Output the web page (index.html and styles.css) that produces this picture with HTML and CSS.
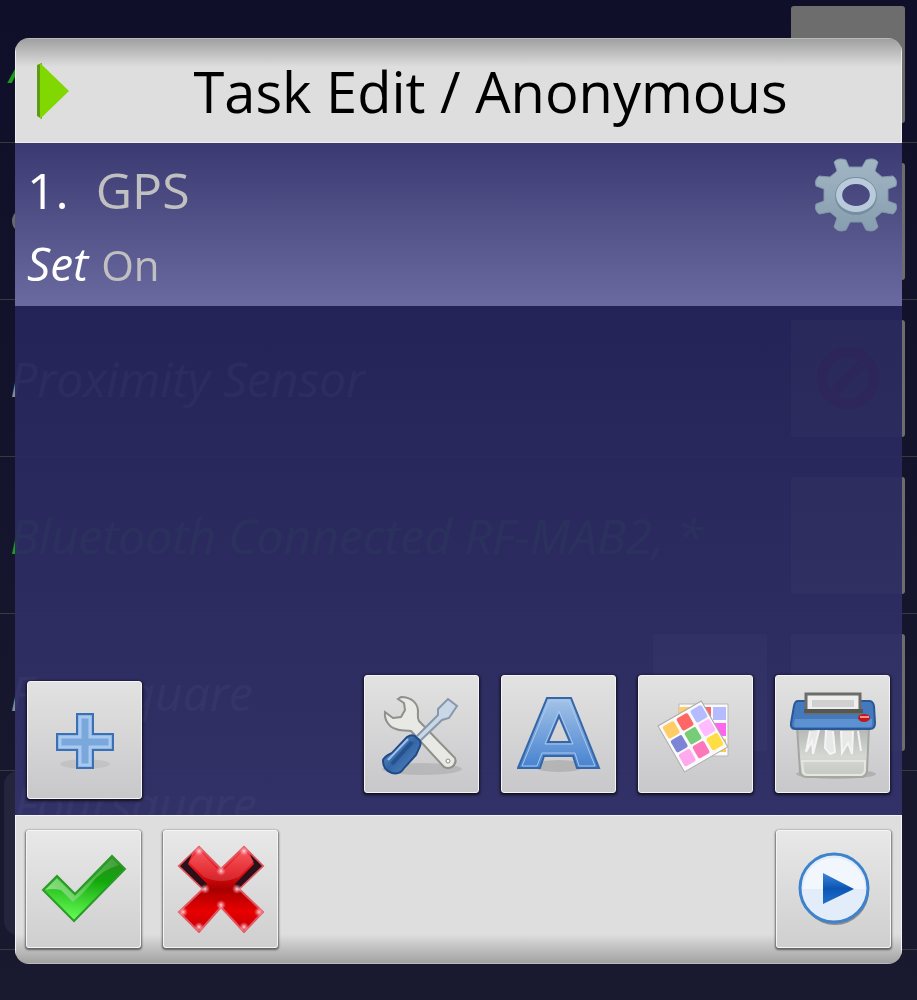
FILE: index.html
```html
<!DOCTYPE html>
<html lang="en">
<head>
  <meta charset="UTF-8">
  <meta name="viewport" content="width=device-width, initial-scale=1.0">
  <title>Task Edit / Anonymous</title>
  <link rel="stylesheet" href="styles.css">
</head>
<body>
  <!-- Profile list behind the dialog -->
  <ul class="profiles">
    <li class="profile first active"><span class="name">A</span><span class="tile"></span></li>
    <li class="profile"><span class="name"><span class="ring"></span></span><span class="tile"></span></li>
    <li class="profile">
      <span class="name">Proximity Sensor</span>
      <span class="tile">
        <svg viewBox="0 0 64 64" width="64" height="64"><circle cx="32" cy="32" r="26" fill="none" stroke="#701838" stroke-width="11"/><path d="M18 46 46 18" stroke="#701838" stroke-width="10"/></svg>
      </span>
    </li>
    <li class="profile active">
      <span class="name">Bluetooth Connected RF-MAB2, *</span>
      <span class="tile">
        <svg viewBox="0 0 84 68" width="84" height="68"><path d="M0 36 14 22 33 40 70 1 84 15 33 67z" fill="#4c6a5c"/></svg>
      </span>
    </li>
    <li class="profile"><span class="name">Foursquare</span><span class="tile"></span><span class="tile"></span></li>
    <li class="profile last"><span class="name">Foursquare</span></li>
  </ul>

  <!-- Task edit dialog -->
  <main class="dialog">
    <header class="title-bar">
      <svg class="title-arrow" viewBox="0 0 34 58" width="34" height="58">
        <path d="M1 3 6 1V57L1 54z" fill="#5f9a14"/>
        <path d="M4 1 33 29 4 57z" fill="#80d800"/>
      </svg>
      <h1>Task Edit / Anonymous</h1>
    </header>

    <section class="action">
      <div class="action-text">
        <p class="action-name"><span class="number">1.</span> GPS</p>
        <p class="action-args"><em>Set</em> On</p>
      </div>
      <svg class="gear" viewBox="-42 -40 84 80" width="84" height="80">
        <defs>
          <linearGradient id="gearFill" x1="0" y1="0" x2="0" y2="1">
            <stop offset="0" stop-color="#a3b5c3"/>
            <stop offset="1" stop-color="#869eb0"/>
          </linearGradient>
        </defs>
        <path fill="url(#gearFill)" stroke="#7f97a8" stroke-width="1" fill-rule="evenodd" d="M-7-28-6-28 6-28 10-35Q18-38 22-33L19-24 26-18 37-19Q42-15 40-9L32-6V6L40 9Q42 15 37 19L26 17 19 23 22 32Q18 38 10 35L6 27H-6L-10 35Q-18 38-22 32L-19 23-26 17-37 19Q-42 15-40 9L-32 6V-6L-40-9Q-42-15-37-19L-26-18-19-24-22-33Q-18-38-10-35zM0-12C-19-12-19 12 0 12S19-12 0-12z"/>
        <ellipse rx="19" ry="17" fill="none" stroke="#768ea0" stroke-width="4" cy="1"/>
        <ellipse rx="17" ry="14" fill="none" stroke="#b9cbdb" stroke-width="6"/>
      </svg>
    </section>

    <section class="workspace">
      <div class="toolbar">
        <button class="tile-button add" aria-label="Add action">
          <svg viewBox="0 -3 60 64" width="60" height="64">
            <ellipse cx="30" cy="53" rx="25" ry="5" fill="#000" opacity="0.06"/>
            <path d="M22 3h16v20h20v16H38v18H22V39H2V23h20z" fill="#7ba8dc" stroke="#3b70b4" stroke-width="2"/>
            <path d="M25 6h10v20h20v10H35v18H25V36H5V26h20z" fill="none" stroke="#a9caee" stroke-width="3"/>
          </svg>
        </button>
        <button class="tile-button" aria-label="Task properties">
          <svg viewBox="0 -3 84 84" width="84" height="84">
            <defs>
              <linearGradient id="handle" x1="0" y1="0" x2="1" y2="1">
                <stop offset="0" stop-color="#7aa7dc"/><stop offset="0.5" stop-color="#3465a4"/><stop offset="1" stop-color="#5b8fd0"/>
              </linearGradient>
            </defs>
            <ellipse cx="42" cy="74" rx="40" ry="6" fill="#000" opacity="0.1"/>
            <path d="M21 2C32 2 38 9 38 16 38 20 37 23 39 26L75 63Q77 68 72 72 68 74 64 72L31 36C25 35 20 36 16 34 9 32 4 25 5 17L13 23 21 22 25 15 24 8 18 4z" fill="#e8e8e4" stroke="#8e908a" stroke-width="2"/>
            <circle cx="68" cy="66" r="2" fill="#fff" stroke="#888a85"/>
            <path d="M36 42 58 20V14L68 4 77 11 69 23 62 25 40 46z" fill="#c9d7e6" stroke="#8798aa" stroke-width="2"/>
            <path d="M27 42Q33 38 37 43 42 46 40 51L36 60 24 73Q20 80 12 78 3 75 3 66 3 62 12 58z" fill="url(#handle)" stroke="#204a87" stroke-width="2"/>
            <path d="M12 69 32 47" stroke="#26528f" stroke-width="4"/>
            <path d="M8 65 28 44" stroke="#9cc0ea" stroke-width="2"/>
          </svg>
        </button>
        <button class="tile-button" aria-label="Label">
          <svg viewBox="0 -4 84 84" width="84" height="84">
            <defs>
              <linearGradient id="letter" x1="0" y1="0" x2="0" y2="1">
                <stop offset="0" stop-color="#a4c3e8"/><stop offset="1" stop-color="#4682cf"/>
              </linearGradient>
            </defs>
            <ellipse cx="42" cy="70" rx="26" ry="6" fill="#000" opacity="0.12"/>
            <path fill-rule="evenodd" d="M30 2H54L82 72H60L56 60H27L23 72H1zM42 20 31 46H53z" fill="url(#letter)" stroke="#3566a8" stroke-width="2"/>
            <path d="M32 5H52L78 70H62L58 57H25L20 70H5zM42 15 28 48H56z" fill="none" stroke="#a9c8ee" stroke-width="1"/>
          </svg>
        </button>
        <button class="tile-button" aria-label="Icon">
          <svg viewBox="1 -3 84 84" width="84" height="84">
            <path d="M26 9H75V61H26z" fill="#fafafa" stroke="#b8b8b8"/>
            <path d="M26 12h14v10H26z" fill="#fc6"/><path d="M44 12h14v12H44z" fill="#f66"/><path d="M60 12h13v13H60z" fill="#b4bcff"/>
            <path d="M60 28h13v13H60z" fill="#f6e"/><path d="M60 44h13v13H60z" fill="#fc4"/>
            <g transform="translate(5 31) rotate(-30)">
              <rect x="0" y="0" width="50" height="53" fill="#fafafa" stroke="#aaa"/>
              <rect x="3" y="3" width="13" height="14" rx="2" fill="#fc6"/><rect x="19" y="3" width="13" height="14" rx="2" fill="#f66"/><rect x="35" y="3" width="13" height="14" rx="2" fill="#b4bcff"/>
              <rect x="3" y="19" width="13" height="14" rx="2" fill="#7c84d8"/><rect x="19" y="19" width="13" height="14" rx="2" fill="#7c7"/><rect x="35" y="19" width="13" height="14" rx="2" fill="#fbf"/>
              <rect x="3" y="35" width="13" height="14" rx="2" fill="#fae"/><rect x="19" y="35" width="13" height="14" rx="2" fill="#f7b"/><rect x="35" y="35" width="13" height="14" rx="2" fill="#fd4"/>
            </g>
          </svg>
        </button>
        <button class="tile-button" aria-label="Delete">
          <svg viewBox="0 -2 90 90" width="90" height="90">
            <defs>
              <linearGradient id="bin" x1="0" y1="0" x2="0" y2="1">
                <stop offset="0" stop-color="#b4b6b4"/><stop offset="0.6" stop-color="#d6d8d4"/><stop offset="1" stop-color="#c4c8c0"/>
              </linearGradient>
            </defs>
            <ellipse cx="48" cy="83" rx="40" ry="5" fill="#000" opacity="0.13"/>
            <path d="M9 36H81L79 80Q78 86 73 86H19Q12 86 12 80z" fill="url(#bin)" stroke="#a4a6a2" stroke-width="2"/>
            <path d="M14 70H77V79Q76 84 72 84H20Q15 84 15 79z" fill="none" stroke="#e4e6e0" stroke-width="2"/>
            <path d="M22 40 18 61 24 50 25 63 31 39M38 39 37 57 42 63 47 61 45 40M53 40 54 62 60 52 64 63 65 40M70 40 73 60" fill="#e8e8e8" stroke="#f4f4f4" stroke-width="2"/>
            <path d="M10 10H81Q85 10 86 15L87 32Q87 38 82 38H8Q2 38 3 32L6 15Q7 10 10 10z" fill="#4479bd" stroke="#2a5796" stroke-width="2"/>
            <path d="M7 28H84V34Q84 36 82 36H8Q5 36 6 33z" fill="#5c92d2"/>
            <path d="M18 3H72V22H18z" fill="#eee" stroke="#6b6d68" stroke-width="3"/>
            <path d="M16 20H75" stroke="#555753" stroke-width="4"/>
            <path d="M24 9H66V16H24z" fill="#d0d0d0"/>
            <ellipse cx="76" cy="27" rx="6" ry="4" fill="#c01818"/><path d="M72 26h9" stroke="#f88" stroke-width="2"/>
          </svg>
        </button>
      </div>
    </section>

    <footer class="button-bar">
      <button class="tile-button" aria-label="Accept">
        <svg viewBox="0 0 86 70" width="86" height="70">
          <defs>
            <linearGradient id="tick" x1="0.6" y1="0" x2="0.4" y2="1">
              <stop offset="0" stop-color="#2a8a20"/><stop offset="0.35" stop-color="#12a80c"/><stop offset="1" stop-color="#68ff58"/>
            </linearGradient>
            <linearGradient id="tickShine" x1="0" y1="0" x2="1" y2="0">
              <stop offset="0" stop-color="#c8f4c0"/><stop offset="1" stop-color="#4fae46"/>
            </linearGradient>
          </defs>
          <path d="M2 36 16 22 34 40 71 2 84 15 33 67z" fill="url(#tick)" stroke="#2a9a28" stroke-width="2"/>
          <path d="M4 36 16 24 34 42 71 4 78 11Q60 16 50 30 42 40 32 48L20 36Q10 34 4 36z" fill="url(#tickShine)" opacity="0.6"/>
        </svg>
      </button>
      <button class="tile-button" aria-label="Cancel">
        <svg viewBox="0 0 88 88" width="88" height="88">
          <defs>
            <linearGradient id="cross" x1="0" y1="0" x2="0" y2="1">
              <stop offset="0" stop-color="#f8444a"/><stop offset="0.3" stop-color="#e00c14"/><stop offset="0.5" stop-color="#a80000"/><stop offset="0.75" stop-color="#e80000"/><stop offset="1" stop-color="#c40008"/>
            </linearGradient>
            <radialGradient id="glint">
              <stop offset="0" stop-color="#ffdce4"/><stop offset="1" stop-color="#ff8090" stop-opacity="0"/>
            </radialGradient>
          </defs>
          <path d="M2 21 22 2 44 24 67 2 86 21 62 44 86 67 67 87 44 62 22 87 2 67 26 44z" fill="url(#cross)" stroke="#e05660" stroke-width="2"/>
          <path d="M3 21 15 9 11 19 30 39 27 44zM85 21 73 9 77 19 58 39 61 44z" fill="#2a1018"/>
          <path d="M22 5 44 28 67 5 77 16 62 32Q44 40 27 32L12 17z" fill="#fff" opacity="0.14"/>
          <g fill="url(#glint)"><circle cx="22" cy="6" r="5"/><circle cx="67" cy="6" r="5"/><circle cx="44" cy="26" r="5"/><circle cx="28" cy="44" r="5"/><circle cx="60" cy="44" r="5"/><circle cx="44" cy="60" r="5"/><circle cx="6" cy="67" r="5"/><circle cx="82" cy="67" r="5"/><circle cx="22" cy="82" r="5"/><circle cx="67" cy="82" r="5"/></g>
        </svg>
      </button>
      <button class="tile-button run" aria-label="Run task">
        <svg viewBox="0 0 76 76" width="76" height="76">
          <defs>
            <linearGradient id="play" x1="0" y1="0" x2="0" y2="1">
              <stop offset="0" stop-color="#3d86d8"/><stop offset="0.5" stop-color="#0c55b4"/><stop offset="1" stop-color="#1f70cc"/>
            </linearGradient>
          </defs>
          <circle cx="39" cy="40" r="34" fill="#000" opacity="0.35"/>
          <circle cx="38" cy="37" r="34" fill="#e2edf9" stroke="#3c82cc" stroke-width="3"/>
          <path d="M7 38A31 31 0 0 1 69 38z" fill="#f2f7fe"/>
          <path d="M27 22 58 38 27 53z" fill="url(#play)"/>
        </svg>
      </button>
    </footer>
  </main>
</body>
</html>
```
FILE: styles.css
```css
:root {
  --line: #3a3a3c;
  --silver: #dedede;
}

* {
  box-sizing: border-box;
}

body {
  margin: 0;
  min-height: 100vh;
  overflow: hidden;
  font-family: "Open Sans", "Noto Sans", sans-serif;
  background: linear-gradient(#0f0f29, #19192f);
}

h1,
p {
  margin: 0;
  font-weight: 400;
}

/* Profile list */
.profiles {
  margin: 0;
  padding: 0 0 14px;
  border-bottom: 1px solid var(--line);
  list-style: none;
}

.profile {
  display: flex;
  align-items: center;
  gap: 24px;
  height: 157px;
  padding: 0 12px 0 10px;
  border-bottom: 1px solid var(--line);
  color: #8a8a8a;
}

.profile.first {
  height: 143px;
  padding-bottom: 14px;
}

.profile.active {
  color: #1f9a1f;
}

.profile.last {
  align-items: flex-start;
  height: 164px;
  margin: 0 16px 0 4px;
  border: 0;
  border-radius: 14px;
  background: #24243c;
}

.name {
  flex: 1;
  font-size: 48px;
  font-style: italic;
  white-space: nowrap;
}

.ring {
  display: block;
  width: 24px;
  height: 24px;
  margin-left: 2px;
  border: 4px solid #6a6a6a;
  border-radius: 50%;
}

.tile {
  display: flex;
  align-items: center;
  justify-content: center;
  width: 114px;
  height: 117px;
  border-radius: 3px;
  background: #6d6d6d;
}

/* Dialog */
.dialog {
  position: fixed;
  inset: 38px 15px 36px;
  display: flex;
  flex-direction: column;
  border-radius: 14px;
  overflow: hidden;
}

.title-bar {
  display: flex;
  align-items: center;
  height: 105px;
  padding: 0 20px;
  border: 1px solid #eee;
  border-top-color: #bbb;
  background: linear-gradient(#a0a0a0, var(--silver) 28px);
}

.title-bar h1 {
  flex: 1;
  padding-left: 30px;
  text-align: center;
  font-size: 56px;
  line-height: 76px;
  color: #000;
}

.action {
  display: flex;
  justify-content: space-between;
  height: 163px;
  padding: 12px 4px 12px 12px;
  background: linear-gradient(#3a3971, #6b6aa0);
  color: #c0c0c0;
}

.action-name {
  font-size: 50px;
  line-height: 70px;
}

.action-name .number {
  margin-right: 14px;
  color: #fff;
}

.action-args {
  font-size: 42px;
  line-height: 76px;
}

.action-args em {
  margin-right: 2px;
  font-size: 46px;
  font-weight: 500;
  color: #fff;
}

.workspace {
  flex: 1;
  display: flex;
  align-items: flex-end;
  padding: 0 12px 16px;
  background: linear-gradient(rgba(38, 37, 90, 0.95), rgba(52, 51, 106, 0.95));
}

.toolbar {
  display: flex;
  flex: 1;
  align-items: flex-start;
  gap: 22px;
}

.tile-button {
  display: flex;
  align-items: center;
  justify-content: center;
  width: 115px;
  height: 118px;
  padding: 0;
  border: 1px solid #f4f4f4;
  border-radius: 3px;
  background: linear-gradient(#e2e2e2, #c8c8cb);
  box-shadow: 0 1px 3px 1px rgba(0, 0, 0, 0.7);
  cursor: pointer;
}

.tile-button.add {
  margin-top: 6px;
  margin-right: auto;
}

.button-bar {
  display: flex;
  align-items: flex-start;
  gap: 22px;
  height: 149px;
  padding: 14px 10px 0;
  border: 1px solid #f4f4f4;
  border-bottom-color: #bbb;
  background: linear-gradient(var(--silver) 118px, #a2a2a2);
}

.button-bar .tile-button {
  background: linear-gradient(#e8e8e8, #cfcfcf);
  box-shadow: 0 1px 2px 1px rgba(0, 0, 0, 0.5);
}

.run {
  margin-left: auto;
}
```
